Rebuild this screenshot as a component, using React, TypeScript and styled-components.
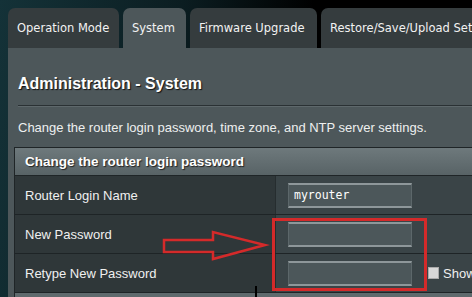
import styled, { createGlobalStyle } from 'styled-components';

const GlobalStyle = createGlobalStyle`
  html, body {
    margin: 0;
    padding: 0;
    background: #000;
  }
  body {
    font-family: 'Liberation Sans', Arial, sans-serif;
  }
`;

const Page = styled.div`
  position: relative;
  width: 472px;
  height: 297px;
  overflow: hidden;
  padding: 8px 0 0 8px;
  box-sizing: border-box;
  background: linear-gradient(100deg, #143238 0%, #0b1d21 35%, #000 60%);
`;

const Tabs = styled.div`
  display: flex;
  gap: 4px;
  height: 40px;
`;

const Tab = styled.div<{ active?: boolean; w: number }>`
  flex: 0 0 ${(p) => p.w}px;
  display: flex;
  align-items: center;
  justify-content: flex-start;
  padding-left: 9px;
  box-sizing: border-box;
  white-space: nowrap;
  overflow: hidden;
  border-radius: 7px 7px 0 0;
  background: ${(p) => (p.active ? '#4d575a' : '#353c3e')};
  color: #f2f2f2;
  font-family: 'DejaVu Sans', Verdana, sans-serif;
  font-size: 11.5px;
`;

const Panel = styled.div`
  background: #4d575a;
  height: 249px;
  padding-left: 6px;
`;

const Title = styled.h1`
  margin: 0 0 11px 4px;
  padding-top: 26px;
  font-size: 16px;
  line-height: 20px;
  font-weight: bold;
  color: #fff;
  text-shadow: 1px 1px 1px #111;
`;

const Rule = styled.div`
  margin-left: 4px;
  height: 1px;
  background: #2a3134;
  border-bottom: 1px solid #5e686b;
`;

const Desc = styled.p`
  margin: 13px 0 11px 4px;
  font-size: 13px;
  line-height: 16px;
  color: #eef0f0;
`;

const Table = styled.div`
  border-top: 1px solid #1f2527;
  border-left: 1px solid #1f2527;
`;

const Header = styled.div`
  height: 27px;
  display: flex;
  align-items: center;
  padding-left: 10px;
  background: linear-gradient(#6e797c, #586366);
  color: #fff;
  font-weight: bold;
  font-size: 13.5px;
  text-shadow: 1px 1px 1px #222;
  border-bottom: 1px solid #1f2527;
`;

const Row = styled.div`
  display: grid;
  grid-template-columns: 261px 1fr;
  height: 38px;
  border-bottom: 1px solid #1e2426;
`;

const Label = styled.div`
  display: flex;
  align-items: center;
  padding-left: 10px;
  background: #2f3739;
  color: #f0f0f0;
  font-size: 13px;
  border-right: 1px solid #262d2f;
`;

const Value = styled.div`
  display: flex;
  align-items: center;
  padding-left: 12px;
  background: #3a4447;
`;

const Field = styled.div`
  width: 124px;
  height: 25px;
  box-sizing: border-box;
  background: #4c575a;
  border-top: 2px solid #8e979a;
  border-bottom: 2px solid #8e979a;
  border-left: 1px solid #5c676a;
  border-right: 1px solid #5c676a;
  color: #fff;
  font-family: 'DejaVu Sans Mono', monospace;
  font-size: 11.5px;
  line-height: 21px;
  padding-left: 5px;
`;

const ShowBox = styled.label`
  display: flex;
  align-items: center;
  gap: 4px;
  margin-left: 16px;
  color: #f0f0f0;
  font-size: 13px;
`;

const Check = styled.span`
  width: 9px;
  height: 10px;
  background: #d8d8d8;
  border: 1px solid #aaa;
`;

const NextHeader = styled.div`
  height: 6px;
  background: #5f6a6d;
`;

const Overlay = styled.svg`
  position: absolute;
  left: 0;
  top: 0;
  pointer-events: none;
`;

export default function App() {
  return (
    <>
      <GlobalStyle />
      <Page>
        <Tabs>
          <Tab w={111}>Operation Mode</Tab>
          <Tab w={63} active>
            System
          </Tab>
          <Tab w={127}>Firmware Upgrade</Tab>
          <Tab w={160}>Restore/Save/Upload Setting</Tab>
        </Tabs>
        <Panel>
          <Title>Administration - System</Title>
          <Rule />
          <Desc>Change the router login password, time zone, and NTP server settings.</Desc>
          <Table>
            <Header>Change the router login password</Header>
            <Row>
              <Label>Router Login Name</Label>
              <Value>
                <Field>myrouter</Field>
              </Value>
            </Row>
            <Row>
              <Label>New Password</Label>
              <Value>
                <Field />
              </Value>
            </Row>
            <Row>
              <Label>Retype New Password</Label>
              <Value>
                <Field />
                <ShowBox>
                  <Check />
                  Show
                </ShowBox>
              </Value>
            </Row>
            <NextHeader />
          </Table>
        </Panel>
        <Overlay width="472" height="297" viewBox="0 0 472 297">
          <rect x="273.5" y="219.5" width="152" height="70" fill="none" stroke="#d42a2a" strokeWidth="3" />
          <polygon
            points="164,240 213,240 213,232 265,245 213,259 213,252 164,252"
            fill="none"
            stroke="#d42a2a"
            strokeWidth="2.5"
          />
          <line x1="256" y1="286" x2="256" y2="297" stroke="#000" strokeWidth="2" />
        </Overlay>
      </Page>
    </>
  );
}
